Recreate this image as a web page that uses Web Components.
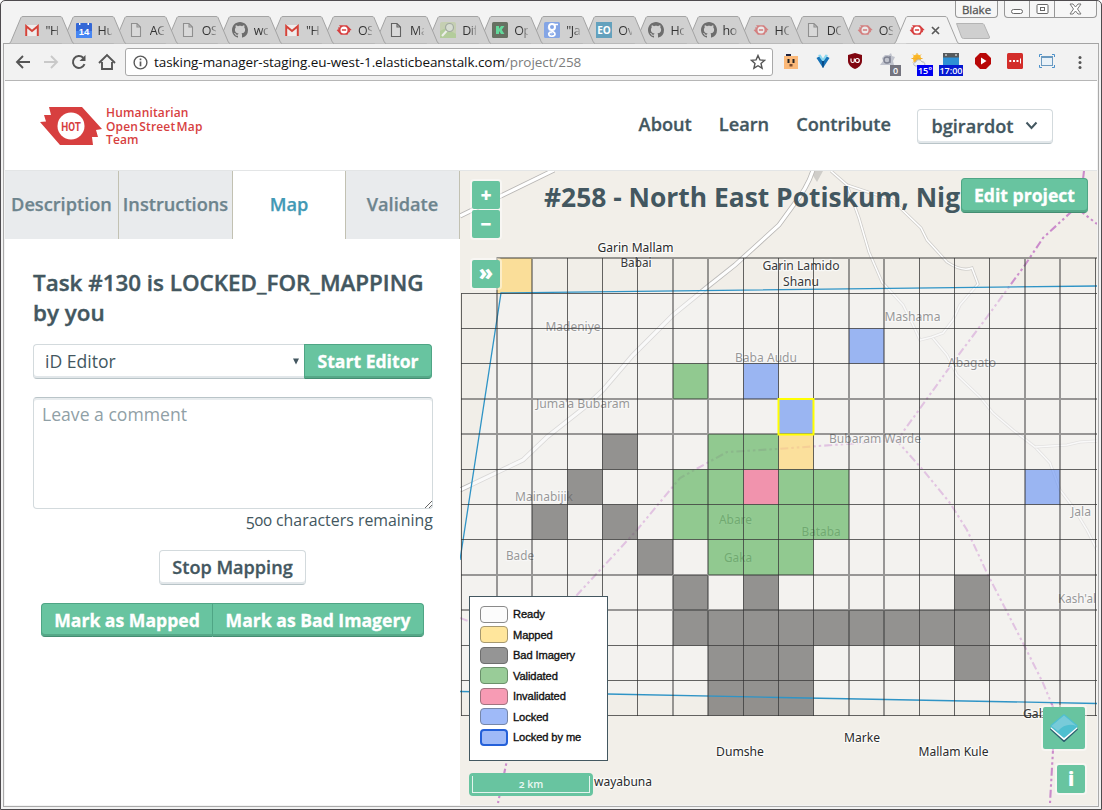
<!DOCTYPE html>
<html lang="en">
<head>
<meta charset="utf-8">
<title>Tasking Manager</title>
<style>
html,body{margin:0;height:100%;overflow:hidden;background:#fff}
body{font-family:"Open Sans","Noto Sans",sans-serif;color:#435760}
</style>
</head>
<body>
<browser-window></browser-window>
<script>
const svg=(w,h,body,vb)=>`<svg width="${w}" height="${h}" viewBox="${vb||`0 0 ${w} ${h}`}" style="display:block">${body}</svg>`;
const hot=o=>svg(16,16,`<g opacity="${o}"><path d="M3 3.2H11L15.6 8L13.8 8.6L14 10L12.6 10.4L11.5 12.8H4.8L.6 8L2.6 7.2L2 5.6L4.4 5.2Z" fill="#d73f3f"/><circle cx="8" cy="8" r="3.5" fill="#fff"/><path d="M5.9 8H10.1" stroke="#d73f3f" stroke-width="1.6"/></g>`);
const doc=c=>svg(16,16,`<path d="M3.5 1.5H9L12.5 5V14.5H3.5ZM9 1.5V5H12.5" fill="#eee" fill-opacity=".3" stroke="${c}" stroke-width="1.1"/>`);
const octo=svg(16,16,`<path fill="#6d6d6d" fill-rule="evenodd" d="M8 0C3.58 0 0 3.58 0 8c0 3.54 2.29 6.53 5.47 7.59.4.07.55-.17.55-.38 0-.19-.01-.82-.01-1.49-2.01.37-2.53-.49-2.69-.94-.09-.23-.48-.94-.82-1.13-.28-.15-.68-.52-.01-.53.63-.01 1.08.58 1.23.82.72 1.21 1.87.87 2.33.66.07-.52.28-.87.51-1.07-1.78-.2-3.64-.89-3.64-3.95 0-.87.31-1.59.82-2.15-.08-.2-.36-1.02.08-2.12 0 0 .67-.21 2.2.82.64-.18 1.32-.27 2-.27s1.36.09 2 .27c1.53-1.04 2.2-.82 2.2-.82.44 1.1.16 1.92.08 2.12.51.56.82 1.27.82 2.15 0 3.07-1.87 3.75-3.65 3.95.29.25.54.73.54 1.48 0 1.07-.01 1.93-.01 2.2 0 .21.15.46.55.38A8.01 8.01 0 0 0 16 8c0-4.42-3.58-8-8-8z"/>`);
const fav={
 gmail:svg(16,16,`<rect x="1.500" y="3" width="13" height="11" rx="1" fill="#efecec"/><path d="M2.200 14V4.200L8 9L13.800 4.200V14" fill="none" stroke="#d5443a" stroke-width="2"/>`),
 cal:svg(16,16,`<rect y="1" width="16" height="15" rx="1" fill="#3367d6"/><rect y="9" width="16" height="7" fill="#4786f3"/><path d="M3 1h1.4v2H3zM11.5 1H13v2h-1.500z" fill="#fff"/><text x="8" y="12.5" font-family="Liberation Sans" font-weight="bold" font-size="9.500" fill="#fff" text-anchor="middle">14</text>`),
 doc:doc('#8f8f8f'),docd:doc('#626262'),octo,hot:hot(1),hotf:hot(.55),
 map:svg(16,16,`<rect width="16" height="16" rx="2" fill="#c5cfb2"/><path d="M0 9L6 6L16 12V16H0Z" fill="#b3cc9b"/><path d="M2 14L7 8.500" stroke="#eceee9" stroke-width="2"/><circle cx="9.500" cy="5.500" r="4" fill="#d7ddd2" stroke="#a2aaa0" stroke-width="1.200"/>`),
 k:svg(16,16,`<rect width="16" height="16" rx="1.500" fill="#677062"/><path d="M4 4H7V6.700L9 4H12.400L9.800 7.700L12.400 12H9L7 8.900V12H4Z" fill="#62d99b"/>`),
 g:svg(16,16,`<rect width="16" height="16" rx="1.500" fill="#84a5e5"/><path d="M3 5l4 8l3-2z" fill="#a9c1ef"/><ellipse cx="8" cy="5" rx="3" ry="3" fill="none" stroke="#fff" stroke-width="2"/><path d="M8 8c-1 2 3 1.500 3 4s-5 3-6 1s1-3 3-3" fill="none" stroke="#fff" stroke-width="1.700"/><path d="M10 2.500h4" stroke="#fff" stroke-width="1.500"/>`),
 eo:svg(16,16,`<rect width="16" height="16" fill="#63a1bd"/><text x="8" y="12" font-family="Open Sans" font-weight="bold" font-size="10" fill="#fff" text-anchor="middle" textLength="13.500">EO</text>`)
};
const define=(name,css,html)=>customElements.define(name,class extends HTMLElement{
 constructor(){super();this.attachShadow({mode:'open'});}
 connectedCallback(){this.shadowRoot.innerHTML=`<style>:host{box-sizing:border-box}*{box-sizing:border-box}${css}</style>${typeof html==='function'?html(this):html}`;}
});

define('browser-tab',`
:host{display:block;width:67px;height:28px;margin-right:-14.930px;position:relative;flex:none}
.shape{position:absolute;inset:0}
.in{position:relative;display:flex;align-items:center;padding:0 0 0 14.500px;height:28px;gap:6px}
span{width:14px;overflow:hidden;white-space:nowrap;font-size:12.500px;letter-spacing:-.4px;color:#333;-webkit-mask-image:linear-gradient(90deg,#000 50%,rgba(0,0,0,.25));mask-image:linear-gradient(90deg,#000 50%,rgba(0,0,0,.25))}`,
e=>{const a=e.hasAttribute('active');return `<div class="shape">${svg(67,28,`<path d="M0 27.500L1.500 26.500L12 1.500Q12.500 .5 14 .5H51Q52.500 .5 53 1.500L63.500 26.500L65 27.500" fill="${a?'#f2f2f2':'#d0d0d0'}" stroke="#a3a3a3"/>`)}</div><div class="in">${fav[e.getAttribute('icon')]}${a?svg(9,9,'<path d="M1 1L8 8M8 1L1 8" stroke="#5a5a5a" stroke-width="1.700"/>'):`<span>${e.getAttribute('label')}</span>`}</div>`});

define('window-controls',`
:host{display:flex;gap:6px;position:absolute;top:0;right:4px}
div{border:1px solid #979797;border-top:0;border-radius:0 0 4px 4px;background:#f6f6f6}
.u{width:43px;height:17px;font:11.500px/18px "Open Sans";text-align:center;color:#555;-webkit-text-stroke:.3px #555}
.b{display:flex;height:17px;width:93px}.b i{display:flex;align-items:center;justify-content:center;border-right:1px solid #979797}.b i:last-child{border:0}`,
`<div class="u">Blake</div><div class="b"><i style="width:25px">${svg(13,12,'<rect x=".5" y="6.500" width="11" height="4" rx="2" fill="#fff" stroke="#666"/>')}</i><i style="width:25px">${svg(13,12,'<rect x="1" y="1.500" width="11" height="9" rx="1" fill="#fff" stroke="#666"/><rect x="4.500" y="4.500" width="4" height="3" fill="none" stroke="#666"/>')}</i><i style="width:41px">${svg(13,12,'<path d="M1 1H4L6.500 4L9 1H12L8.500 6L12 11H9L6.500 8L4 11H1L4.500 6Z" fill="#fff" stroke="#777"/>')}</i></div>`);

const tabs=[['gmail','"H'],['cal','Hu'],['doc','AG'],['doc','OS'],['octo','wc'],['gmail','"H'],['hot','OS'],['docd','Ma'],['map','Dif'],['k','Op'],['g','"Ja'],['eo','Ov'],['octo','Ho'],['octo','ho'],['hotf','HO'],['doc','DO'],['hotf','OS']];
define('tab-strip',`
:host{display:flex;height:43px;padding:15px 0 0 6px;align-items:flex-end;border-bottom:1px solid #a3a3a3}
browser-tab{margin-bottom:-1px}
.new{margin:0 0 3px 9px}`,
()=>tabs.map((t,i)=>`<browser-tab icon="${t[0]}" label='${t[1]}' style="z-index:${20-i}"></browser-tab>`).join('')+`<browser-tab icon="hot" active style="z-index:40"></browser-tab><div class="new">${svg(36,18,'<path d="M1.500 1.500H27Q28.500 1.500 29 2.500L34.500 15Q35 16.500 33 16.500H8.500Q7 16.500 6.500 15Z" fill="#cfcfcf" stroke="#b4b4b4"/>')}</div>`);

define('extension-icon',`
:host{display:block;width:20px;height:22px;position:relative;flex:none}
.i{position:absolute;left:2px;top:2px}
b{position:absolute;bottom:-3px;font:600 9px/11px "Open Sans";color:#fff;text-align:center;white-space:nowrap}`,
e=>{const x={
face:svg(16,16,'<rect x="1" y="3" width="14" height="13" fill="#fbb878"/><path d="M3 1h5v2H3z" fill="#1b2140"/><path d="M5.500 6v4M10.500 6v4" stroke="#222" stroke-width="2"/><path d="M6.500 11h3v2.500h-3z" fill="#7b4a2d"/>'),
vee:svg(16,16,'<path d="M1.500 5L8 15L14.500 5L11 3L8 7L5 3Z" fill="#1673b8"/><path d="M3 2l5 7l5-7l-2.500-.5l-2.500 4l-2.500-4z" fill="#8bd7ee"/><path d="M6.800 8h2.400l-.6 6.500H7.400z" fill="#0b4a85"/>'),
ub:svg(16,16,'<path d="M8 0l7 2v6c0 4-4 7-7 8c-3-1-7-4-7-8V2z" fill="#800610"/><path d="M4 5.500v2.500c0 2 3.300 2 3.300 0V5.500" fill="none" stroke="#fff" stroke-width="1.200"/><circle cx="10.300" cy="7.500" r="2" fill="none" stroke="#fff" stroke-width="1.200"/>'),
a:svg(16,16,'<path d="M1 12L4 8L3 5l3-3h4l2-2l1 3l3 1l-2 4l1 4H9z" fill="#c0c3cd"/><circle cx="8" cy="7" r="3" fill="none" stroke="#7e8292" stroke-width="1.400"/><path d="M11 3v7" stroke="#7e8292" stroke-width="1.400"/>'),
sun:svg(16,16,'<circle cx="6" cy="5.500" r="4" fill="#ffbe24"/><path d="M6 0v11M.5 5.500h11M2 1.500l8 8M10 1.500l-8 8" stroke="#f4ae2d"/><path d="M5 13c-3 0-3-4 0-4c0-3 5-3 6 0c3-1 4 4 1 4z" fill="#eef1f3" stroke="#b3b8bc"/>'),
clk:svg(16,16,'<rect y="0" width="16" height="5" fill="#565a5d"/><rect y="4.500" width="16" height="8.500" fill="#2e90d4"/><path d="M2 2h2M12 2h2" stroke="#fff"/>'),
play:svg(16,16,'<path d="M5 0h6l5 5v6l-5 5H5l-5-5V5z" fill="#b80808"/><path d="M6 4.500l5.500 3.500L6 11.500z" fill="#fff"/>'),
lp:svg(16,16,'<rect width="16" height="16" rx="1.500" fill="#d32d2a"/><path d="M2.300 8h2M6 8h2M9.500 8h2" stroke="#fff" stroke-width="2"/><path d="M13.500 5.500v5" stroke="#fff"/>'),
win:svg(16,16,'<rect x="2.500" y="3.500" width="11" height="9" fill="#eaf2f8" stroke="#6b9ac0"/><path d="M2 4h12" stroke="#6b9ac0" stroke-width="2"/><path d="M.5 4V1.500H3M13 1.500h2.500V4M.5 12v2.500H3M13 14.500h2.500V12" fill="none" stroke="#4b91cb"/>')};
const b=e.getAttribute('badge');return `<div class="i">${x[e.getAttribute('kind')]}</div>${b?`<b style="background:${e.getAttribute('color')};width:${e.getAttribute('w')}px;left:${e.getAttribute('x')}px">${b}</b>`:''}`});

define('tool-bar',`
:host{display:flex;height:37px;align-items:center;background:#f2f2f2;border-bottom:1px solid #b6b6b6;padding:0 9px 0 9px;flex:none}
.nav{display:flex;gap:10px;width:111px}
.omni{display:flex;align-items:center;width:648px;height:28px;border:1px solid #a9a9a9;border-radius:3px;background:#fff;padding:0 6px 0 7px;margin-right:8px}
.url{flex:1;margin-left:6px;font-size:13.500px;color:#111;white-space:nowrap;letter-spacing:-.07px}.url i{font-style:normal;color:#7d7d7d}
.ext{display:flex;gap:12px;align-items:center;flex:1}
.dots{margin-right:6px}`,
`<div class="nav">
${svg(18,18,'<path d="M16 9H3M9 3L3 9l6 6" fill="none" stroke="#555" stroke-width="1.900"/>')}
${svg(18,18,'<path d="M2 9H15M9 3l6 6l-6 6" fill="none" stroke="#c9c9c9" stroke-width="1.900"/>')}
${svg(18,18,'<path d="M14.500 11.200A6 6 0 1 1 13.200 4.700" fill="none" stroke="#555" stroke-width="2"/><path d="M15.500 2v6h-6z" fill="#555"/>')}
${svg(18,18,'<path d="M1 10L9 2l8 8M4 9v7h10V9" fill="none" stroke="#555" stroke-width="1.900"/>')}</div>
<div class="omni">${svg(15,15,'<circle cx="7.500" cy="7.500" r="6.400" fill="none" stroke="#5a5a5a" stroke-width="1.400"/><path d="M7.500 6.500v4.700M7.500 3.500v1.800" stroke="#5a5a5a" stroke-width="1.700"/>')}<div class="url">tasking-manager-staging.eu-west-1.elasticbeanstalk.com<i>/project/258</i></div>${svg(16,16,'<path d="M8 1.500l1.900 4.400l4.700.4l-3.600 3.200l1.100 4.700L8 11.700l-4.100 2.500L5 9.500L1.400 6.300l4.700-.4z" fill="none" stroke="#555" stroke-width="1.400"/>')}</div>
<div class="ext"><extension-icon kind="face"></extension-icon><extension-icon kind="vee"></extension-icon><extension-icon kind="ub"></extension-icon><extension-icon kind="a" badge="0" color="#74747f" x="13" w="11"></extension-icon><extension-icon kind="sun" badge="15°" color="#0000f0" x="8" w="16"></extension-icon><extension-icon kind="clk" badge="17:00" color="#0519d1" x="-2" w="24"></extension-icon><extension-icon kind="play"></extension-icon><extension-icon kind="lp"></extension-icon><extension-icon kind="win"></extension-icon></div>
<div class="dots">${svg(4,16,'<g fill="#555"><circle cx="2" cy="3.500" r="1.500"/><circle cx="2" cy="8.500" r="1.500"/><circle cx="2" cy="13.500" r="1.500"/></g>')}</div>`);

define('app-button',`
:host{display:flex;align-items:center;justify-content:center;height:35px;border:1px solid #d3dadd;border-bottom:1px solid #b9c4c8;box-shadow:inset 0 -2px #e2e7ea;border-radius:4px;background:#fff;font-weight:600;font-size:18.100px;color:#435760;padding-bottom:1px;white-space:nowrap;-webkit-text-stroke:.3px}
:host([primary]){background:#68c4a0;color:#fff;font-weight:700;font-size:17.600px;border-color:#4fa585;border-bottom-color:#448d72;box-shadow:inset 0 -2px #56a888}
:host([left]){border-radius:4px 0 0 4px}
:host([right]){border-radius:0 4px 4px 0}`,`<slot></slot>`);

define('hot-logo',`:host{display:flex;gap:4px;align-items:center}
.t{font:600 12px/13.700px "Open Sans";color:#d73f3f;white-space:nowrap;letter-spacing:.15px;padding-top:1px}.t div:nth-child(2){word-spacing:-2px}`,
`${svg(62,38,'<path d="M9 0H42L62 22L56 23L58 30H52L53 38H20L0 15L6 14.500L4 8L11 8Z" fill="#d73f3f"/><circle cx="31" cy="19" r="13.500" fill="#fff"/><text x="31" y="23.700" font-family="Roboto" font-weight="bold" font-size="13" fill="#d73f3f" text-anchor="middle" textLength="19.500" lengthAdjust="spacingAndGlyphs">HOT</text>')}<div class="t"><div>Humanitarian</div><div>Open Street Map</div><div>Team</div></div>`);

define('site-header',`
:host{display:flex;flex:none;height:90px;border-bottom:1px solid #e3e5e6;background:#fff;padding:0 44px 0 35px;align-items:center;justify-content:space-between}
hot-logo{margin-top:1px}
nav{display:flex;align-items:center;gap:27px;font-weight:600;font-size:18.200px;margin-bottom:2px;-webkit-text-stroke:.3px}
nav>span{position:relative;top:-1px}
app-button{width:136px;margin-left:-1px;margin-top:3px;line-height:1.550}
i{margin:0 0 0 12px}`,
`<hot-logo></hot-logo><nav><span>About</span><span>Learn</span><span>Contribute</span><app-button><span style="padding-top:2px">bgirardot</span><i>${svg(13,9,'<path d="M1.500 1.500l5 5.500l5-5.500" fill="none" stroke="#435760" stroke-width="2"/>')}</i></app-button></nav>`);

define('panel-tabs',`
:host{display:grid;grid-template-columns:114px 114px 113px 114px;height:68px;font-weight:600;font-size:18.200px;color:#6d848d;-webkit-text-stroke:.25px}
div{background:#e9ebed;border-right:1px solid #c2c1b2;display:flex;align-items:center;justify-content:center;white-space:nowrap;padding-bottom:2px}
.on{background:#fff;color:#4299b5}`,
`<div>Description</div><div>Instructions</div><div class="on">Map</div><div>Validate</div>`);

define('side-panel',`
:host{display:block;width:455px;flex:none;background:#fff}
.body{padding:0 27px 0 28px;display:flex;flex-direction:column}
h2{margin:29px -5px 16px 0;font-size:22.400px;line-height:30px;font-weight:600;-webkit-text-stroke:.4px}
.row{display:flex;height:35px;margin-right:1px}
.sel{flex:1;border:1px solid #d3dadd;border-right:0;border-bottom-color:#b9c4c8;box-shadow:inset 0 -2px #e2e7ea;border-radius:4px 0 0 4px;display:flex;align-items:center;justify-content:space-between;padding:0 5px 1px 11px;font-size:17.600px}
.ta{margin-top:18px;height:112px;border:1px solid #d3dadd;border-top-color:#b9c4c8;box-shadow:inset 0 2px #e8ecee;border-radius:4px;padding:3px 0 0 8px;font-size:17.600px;line-height:26px;color:#90a0a6;display:flex;justify-content:space-between}
.ta svg{align-self:flex-end}
.cnt{text-align:right;font-size:15.900px;line-height:22px;font-variant-numeric:oldstyle-nums;font-feature-settings:"onum"}
.stop{align-self:center;width:147px;margin:19px 1px 18px 0}`,
`<panel-tabs></panel-tabs><div class="body"><h2>Task #130 is LOCKED_FOR_MAPPING<br>by you</h2>
<div class="row"><div class="sel"><span>iD Editor</span>${svg(6,7,'<path d="M0 .5H6L3 6.500Z" fill="#435760"/>')}</div><app-button primary right style="width:128px">Start Editor</app-button></div>
<div class="ta"><span>Leave a comment</span>${svg(8,8,'<path d="M1 8L8 1M5 8L8 5" stroke="#666"/>')}</div>
<div class="cnt">500 characters remaining</div>
<app-button class="stop">Stop Mapping</app-button>
<div class="row" style="height:34px;margin-left:8px"><app-button primary left style="width:171px;height:34px;border-right:0">Mark as Mapped</app-button><app-button primary right style="width:212px;height:34px">Mark as Bad Imagery</app-button></div></div>`);

const gx=[461.5,497,532,567.5,602.5,637.5,673,708,743.5,778.5,813.5,849,884,919.5,954.5,989.5,1025,1060,1095.5];
const gy=[258,293.5,328.5,363.5,399,434,469.5,504.5,539.5,575,610,645.5,680.5,715.5];
const cells={y:[[0,1],[5,9]],b:[[2,11],[3,8],[4,9],[6,16]],p:[[6,8]],
g:[[3,6],[5,7],[5,8],[6,6],[6,7],[6,9],[6,10],[7,6],[7,7],[7,8],[7,9],[7,10],[8,7],[8,8],[8,9]],
k:[[5,4],[6,3],[7,2],[7,4],[8,5],[9,6],[9,8],[9,14],...[6,7,8,9,10,11,12,13,14].map(c=>[10,c]),[11,7],[11,8],[11,9],[11,14],[12,7],[12,8],[12,9]]};
const fill={y:'#ffd66e',b:'#6a93f3',p:'#f05f88',g:'#5cb25c',k:'#5f5e5c'};
function mapArt(){
 const road=(d,w,c='#cfcdca')=>`<path d="${d}" fill="none" stroke="${c}" stroke-width="${w+1.600}"/><path d="${d}" fill="none" stroke="#fff" stroke-width="${w}"/>`;
 const bd=d=>`<path d="${d}" fill="none" stroke="#cb8bcb" stroke-width="2.100" stroke-dasharray="8 3 2.500 3 2.500 3"/>`;
 const lab=(t,x,y,w)=>`<text x="${x}" y="${y}" text-anchor="middle" textLength="${w}" lengthAdjust="spacingAndGlyphs" stroke="#fff" stroke-opacity=".7" stroke-width="2.500" paint-order="stroke" stroke-linejoin="round">${t}</text>`;
 let s='<rect x="460" y="171" width="637" height="634" fill="#f2efe9"/>';
 s+=road('M831 171L847 185L859 218L869 252L882 282L903 305L913 325L920 340L932 337L947 355L957 375L980 397L993 413L1013 430L1035 447L1050 463L1060 490L1073 507L1087 530L1097 550',1.500);
 s+=road('M847 185L892 200L921 228L927 240L947 262Q962 272 972 268L978 284L960 305L953 320L943 333L932 337M1035 447L1067 445L1080 442L1097 441',1.500);
 s+='<path d="M810 171L823 171L817 182Z" fill="#cfcdc9"/>'+road('M554 170L460 216M813 170Q808 187 792 207L779 225L735 265L706 288L673 315L633 355L603 390L585 407L547 437L523 460L460 490',3.2,'#b9b7b5');
 s+=bd('M1084 171L1080 205L1070 213L1043 238L1025 265L987 317L957 357L903 432L898 442L923 470L950 503L967 530L987 573L1025 647L1043 683L1053 707L1053 750L1050 803')+bd('M1078 209L1097 224')+bd('M898 440L860 443L777 449L727 452L680 478L637 530L577 595L520 690L507 760L498 803')+bd('M460 618L477 624');
 s+='<g font-family="Noto Sans" font-size="12" fill="#2b2b2b">'+[['Garin Mallam',635.5,251.5,76],['Babai',636,267,31],['Garin Lamido',801,270,77],['Shanu',801,286,36],['Madeniye',573,331,55],['Mashama',912.500,321,56],['Abagato',972,367,48],['Baba Audu',766,362,62],["Juma'a Bubaram",583,408,94],['Bubaram Warde',875,443,92],['Mainabijik',544,501,58],['Abare',735.500,524,33],['Bataba',821,536,39],['Jala',1081,516,20],['Bade',520,560,28],['Gaka',738,562,28],["Kash'al",1077,603,38],['Gaba',1038,718,30],['Marke',862,742,36],['Dumshe',740,756,48],['Mallam Kule',953.500,756,70],['wayabuna',623,786,58]].map(a=>lab(...a)).join('')+'</g>';
 s+='<path d="M501 293L1097 286V703.500L460 691.500V560Z" fill="#f8f8f8" fill-opacity=".5"/>';
 s+=`<path d="M497 258H1095.500V715.500H461.500V293.500H497Z" fill="#e8ebe8" fill-opacity=".08"/>`;
 for(const k in cells)s+=`<g fill="${fill[k]}" fill-opacity=".65">`+cells[k].map(([r,c])=>`<rect x="${gx[c]}" y="${gy[r]}" width="${gx[c+1]-gx[c]}" height="${gy[r+1]-gy[r]}"/>`).join('')+'</g>';
 s+='<g font-family="Noto Sans" font-size="12" fill="#1f4a22" fill-opacity=".45" text-anchor="middle" aria-hidden="true"></g>';
 s+='<path d="M460 560L501 293L1097 286M460 691.500L607 694L780 697.500L1097 703.500" fill="none" stroke="#2f94c6" stroke-width="1.300"/>';
 const g={thin:'',wide:''};
 gy.forEach((y,r)=>g[y%1?'thin':'wide']+=`M${r?461:496.5} ${y}H1097`);
 gx.forEach((x,c)=>g[x%1?'thin':'wide']+=`M${x} ${c?258:293.5}V716`);
 s+=`<path d="${g.thin}" stroke="#333" stroke-opacity=".75"/><path d="${g.wide}" stroke="#333" stroke-opacity=".48" stroke-width="2"/>`;
 s+=`<rect x="778.500" y="399" width="35" height="35.500" fill="none" stroke="#ff0" stroke-width="2"/>`;
 return `<svg class="art" width="637" height="634" viewBox="460 171 637 634">${s}</svg>`;
}
define('legend-item',`:host{display:flex;align-items:center;gap:5px;height:20.500px}
i{width:28px;height:17px;border:1.500px solid #777;border-radius:4px}
span{font:11.150px/16px "Liberation Sans";color:#111;-webkit-text-stroke:.35px #111;white-space:nowrap;position:relative;letter-spacing:-.1px}`,
e=>`<i style="background:${e.getAttribute('color')};border-color:${e.getAttribute('edge')||'#8a8a8a'};border-width:${e.getAttribute('bw')||1}px"></i><span><slot></slot></span>`);
define('map-legend',`:host{display:block;width:139px;height:165px;background:#fff;border:1px solid #435760;padding:7px 0 0 10px}`,
`<legend-item color="#fcfcfc">Ready</legend-item><legend-item color="#ffe69c" edge="#a69970">Mapped</legend-item><legend-item color="#959595" edge="#6e6e6e">Bad Imagery</legend-item><legend-item color="#99cc98" edge="#6b916b">Validated</legend-item><legend-item color="#f79bb4" edge="#a17480">Invalidated</legend-item><legend-item color="#9fbaf8" edge="#7787a8">Locked</legend-item><legend-item color="#9fbaf8" edge="#2460d9" bw="2">Locked by me</legend-item>`);
define('map-control',`:host{display:flex;flex-direction:column;gap:1px;padding:2px;background:rgba(255,255,255,.45);border-radius:4px;color:#fff;font-weight:700}
::slotted(*){display:flex;align-items:center;justify-content:center;background:#68c4a0;width:28px;height:28px;border-radius:2px}`,`<slot></slot>`);
define('map-view',`
:host{display:block;position:relative;width:637px;height:634px;overflow:hidden}
.art{position:absolute;inset:0}
.o{position:absolute}
h1{margin:0;left:84px;top:6px;white-space:nowrap;font-size:26.400px;line-height:40px;font-weight:700}
b{font-size:19px;line-height:1}
.scale{left:9px;top:602px;width:124px;height:23px;border-radius:4px;background:#68c4a0;padding:3px}
.scale div{height:17px;border:1px solid #e4f4ed;border-top:0;font-size:10.500px;line-height:17px;color:#eaf7f2;text-align:center;font-weight:600;font-feature-settings:"onum"}`,
()=>`${mapArt()}<h1 class="o">#258 - North East Potiskum, Nig</h1>
<app-button primary class="o" style="left:501px;top:7px;width:127px;height:35px">Edit project</app-button>
<map-control class="o" style="left:10px;top:8px"><b>+</b><b>−</b></map-control>
<map-control class="o" style="left:10px;top:87px"><b style="font-size:21px;padding-bottom:3px;height:28px;box-sizing:border-box">»</b></map-control>
<map-control class="o" style="left:581px;top:534px"><b style="width:42px;height:42px">${svg(32,32,'<path d="M3 17L16 29L29 17L16 8Z" fill="#2d5f70" stroke="#2d5f70" stroke-width="2" stroke-linejoin="round"/><path d="M3 15.500L16 27L29 15.500" fill="#fff" stroke="#fff" stroke-width="2" stroke-linejoin="round"/><path d="M3.500 14L16 3.500L28.500 14L16 24.500Z" fill="#4fbfd0" stroke="#4fbfd0" stroke-width="2.500" stroke-linejoin="round"/><path d="M3.500 14L16 3.500L28.500 14Q18 10 10 19Z" fill="#78cbd9"/>')}</b></map-control>
<map-control class="o" style="left:595px;top:592px"><b>i</b></map-control>
<map-legend class="o" style="left:9px;top:425px"></map-legend>
<div class="o scale"><div>2 km</div></div>`);

define('browser-window',`
:host{display:flex;flex-direction:column;position:relative;width:1102px;height:810px;background:#f3f3f3;border:1px solid #4e4b4e;border-radius:5px 5px 0 0;overflow:hidden}
.in{flex:1;display:flex;flex-direction:column;margin:0 2px 2px 2px;min-height:0}
tab-strip{flex:none}
.page{flex:1;display:flex;flex-direction:column;border:1px solid #aaa;border-top:0;padding:0 1px 1px;min-height:0}
.main{display:flex;flex:1;min-height:0;overflow:hidden}`,
`<window-controls></window-controls><div class="in"><tab-strip></tab-strip><div class="page"><tool-bar></tool-bar><site-header></site-header><div class="main"><side-panel></side-panel><map-view></map-view></div></div></div>`);
</script>
</body>
</html>
